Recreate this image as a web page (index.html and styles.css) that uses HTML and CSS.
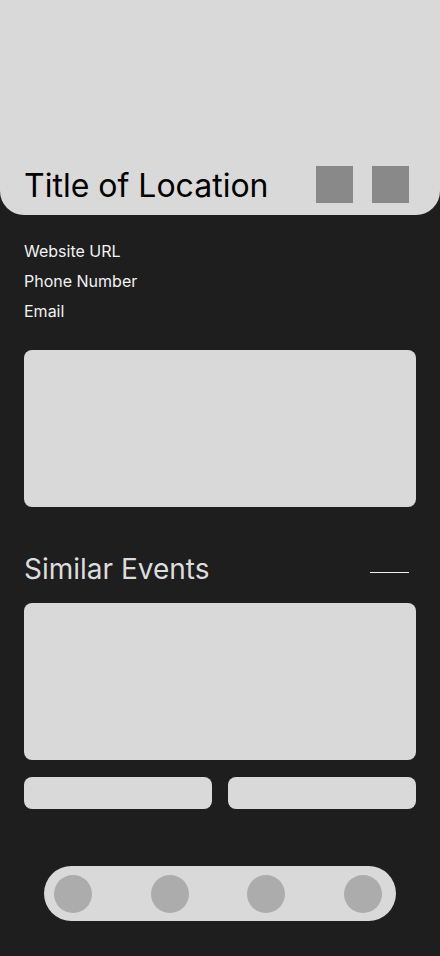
FILE: index.html
```html
<!DOCTYPE html>
<html lang="en">

<head>
    <meta charset="UTF-8">
    <meta name="viewport" content="width=device-width, initial-scale=1.0">
    <title>Location</title>
    <link rel="stylesheet" href="styles.css">
</head>

<body>

    <header class="hero">
        <div class="hero-row">
            <h1 class="hero-title">Title of Location</h1>
            <div class="hero-actions">
                <span class="square"></span>
                <span class="square"></span>
            </div>
        </div>
    </header>

    <main class="content">
        <ul class="contact">
            <li>Website URL</li>
            <li>Phone Number</li>
            <li>Email</li>
        </ul>

        <div class="card"></div>

        <div class="section-head">
            <h2>Similar Events</h2>
            <span class="dash"></span>
        </div>

        <div class="card"></div>

        <div class="pills">
            <div class="pill"></div>
            <div class="pill"></div>
        </div>

        <nav class="tabbar">
            <span class="dot"></span>
            <span class="dot"></span>
            <span class="dot"></span>
            <span class="dot"></span>
        </nav>
    </main>

</body>
</html>
```

FILE: styles.css
```css
body {
    margin: 0;
    background-color: #1e1e1e;
    font-family: Inter, "Noto Sans", sans-serif;
    height: 956px;
    overflow: hidden;
}

.hero {
    height: 215px;
    background-color: #d9d9d9;
    border-radius: 0 0 24px 24px;
    display: flex;
    flex-direction: column;
    justify-content: flex-end;
}

.hero-row {
    display: flex;
    align-items: center;
    justify-content: space-between;
    padding: 0 31px 12px 24px;
}

.hero-title {
    margin: 1px 0 -1px 0;
    font-size: 32px;
    font-weight: 400;
    line-height: 37px;
    color: #000;
}

.hero-actions {
    display: flex;
    gap: 19px;
}

.square {
    display: block;
    width: 37px;
    height: 37px;
    background-color: #898989;
}

.content {
    padding: 21px 24px 0 24px;
}

.contact {
    list-style: none;
    margin: 0;
    padding: 0;
    font-size: 16px;
    line-height: 30px;
    color: #f2f2f2;
}

.card {
    height: 157px;
    background-color: #d9d9d9;
    border-radius: 8px;
}

.contact + .card {
    margin-top: 24px;
}

.section-head {
    display: flex;
    align-items: center;
    justify-content: space-between;
    height: 36px;
    margin: 44px 0 16px 0;
    padding-right: 7px;
}

.section-head h2 {
    margin: 0;
    font-size: 28px;
    font-weight: 400;
    color: #dcdcdc;
}

.dash {
    display: block;
    width: 39px;
    height: 1px;
    background-color: #f0f0f0;
    margin-top: 6px;
}

.pills {
    display: flex;
    gap: 16px;
    margin-top: 17px;
}

.pill {
    flex: 1;
    height: 32px;
    background-color: #d9d9d9;
    border-radius: 8px;
}

.tabbar {
    display: flex;
    align-items: center;
    justify-content: space-between;
    height: 55px;
    margin: 57px 20px 0 20px;
    padding: 0 14px 0 10px;
    background-color: #d9d9d9;
    border-radius: 28px;
}

.dot {
    display: block;
    width: 38px;
    height: 38px;
    border-radius: 50%;
    background-color: #acacac;
}
```
